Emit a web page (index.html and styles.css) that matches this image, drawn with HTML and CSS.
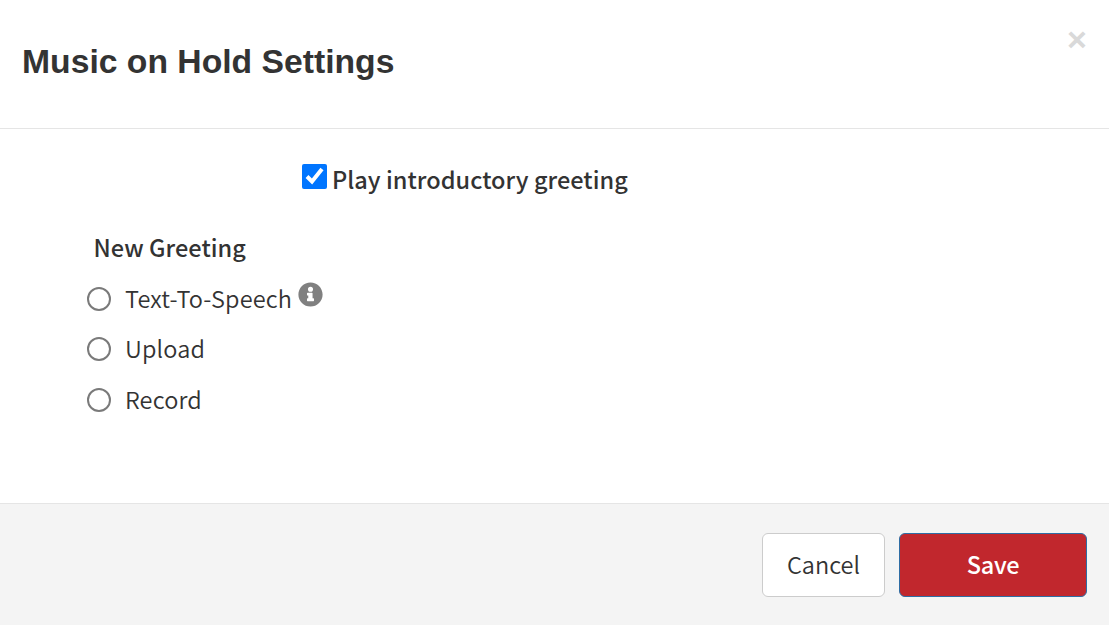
FILE: index.html
```html
<!DOCTYPE html>
<html lang="en">
<head>
<meta charset="utf-8">
<title>Music on Hold Settings</title>
<link rel="stylesheet" href="styles.css">
</head>
<body>
<div class="modal">
  <header class="modal-header">
    <h1 class="modal-title">Music on Hold Settings</h1>
    <button class="close" type="button">×</button>
  </header>
  <main class="modal-body">
    <label class="intro">
      <input class="intro-check" type="checkbox" checked>
      <span>Play introductory greeting</span>
    </label>
    <div class="group-title">New Greeting</div>
    <div class="options">
      <label class="option">
        <input class="radio" type="radio" name="greeting">
        <span>Text-To-Speech</span>
        <svg class="info" viewBox="0 0 512 512" width="25" height="25"><path fill="#808080" fill-rule="evenodd" d="M256 8C119 8 8 119 8 256s111 248 248 248 248-111 248-248S393 8 256 8zm0 90a52 52 0 1 1 0 104 52 52 0 0 1 0-104zm72 282c0 7-5 12-12 12H196c-7 0-12-5-12-12v-34c0-7 5-12 12-12h14v-56h-14c-7 0-12-5-12-12v-34c0-7 5-12 12-12h90c7 0 12 5 12 12v102h18c7 0 12 5 12 12v34z"/></svg>
      </label>
      <label class="option">
        <input class="radio" type="radio" name="greeting">
        <span>Upload</span>
      </label>
      <label class="option">
        <input class="radio" type="radio" name="greeting">
        <span>Record</span>
      </label>
    </div>
  </main>
  <footer class="modal-footer">
    <button class="btn btn-cancel" type="button">Cancel</button>
    <button class="btn btn-save" type="button">Save</button>
  </footer>
</div>
</body>
</html>
```
FILE: styles.css
```css
* { box-sizing: border-box; }
html, body { margin: 0; height: 100%; }
body {
  background: #fff;
  color: #333;
  font-family: "Noto Sans CJK JP", "Noto Sans", sans-serif;
  font-size: 23.5px;
  font-weight: 350;
  overflow: hidden;
}
.modal { display: flex; flex-direction: column; height: 625px; }
.modal-header {
  height: 129px;
  flex: none;
  border-bottom: 1px solid #e5e5e5;
  padding: 40px 22px 0;
  display: flex;
  justify-content: space-between;
  align-items: flex-start;
}
.modal-title {
  margin: 0;
  font-family: "Liberation Sans", Arial, sans-serif;
  font-weight: 700;
  font-size: 33.7px;
  line-height: 42px;
}
.close {
  border: 0;
  background: none;
  padding: 0;
  margin: -23px -2px 0 0;
  width: 24px;
  font-family: "Liberation Sans", Arial, sans-serif;
  font-size: 34px;
  font-weight: 700;
  line-height: 44px;
  color: #d9d9d9;
}
.modal-body { flex: 1; padding: 35px 0 0 87px; }
.intro {
  display: flex;
  align-items: center;
  gap: 5px;
  margin-left: 215px;
  height: 30px;
  font-weight: 500;
  letter-spacing: 0.04px;
  line-height: 30px;
}
.intro-check { margin: -6px 0 0; width: 25px; height: 25px; flex: none; accent-color: #0075ff; }
.group-title {
  margin: 38px 0 0 6.5px;
  height: 30px;
  line-height: 30px;
  font-weight: 500;
  letter-spacing: 0.05px;
}
.options { margin-top: 20.9px; display: flex; flex-direction: column; gap: 20.5px; }
.option { display: flex; align-items: center; height: 30px; line-height: 30px; letter-spacing: 0.14px; }
.radio {
  appearance: none;
  margin: 2.2px 14px 0 0;
  width: 24px;
  height: 24px;
  flex: none;
  background: #fff;
  border: 2px solid #7a7a7a;
  border-radius: 50%;
}
.info { margin: -6px 0 0 6px; flex: none; }
.modal-footer {
  height: 122px;
  flex: none;
  background: #f4f4f4;
  border-top: 1px solid #e5e5e5;
  padding: 29px 22px 0 0;
  display: flex;
  justify-content: flex-end;
  align-items: flex-start;
  gap: 14px;
}
.btn {
  height: 64px;
  border-radius: 6px;
  font: inherit;
  line-height: 30px;
  padding: 0 0 2px;
}
.btn-cancel { width: 123px; background: #fff; border: 1px solid #ccc; color: #333; }
.btn-save { width: 188px; background: #c1272d; border: 1px solid #2e6da4; color: #fff; font-weight: 500; letter-spacing: -0.3px; }
```
